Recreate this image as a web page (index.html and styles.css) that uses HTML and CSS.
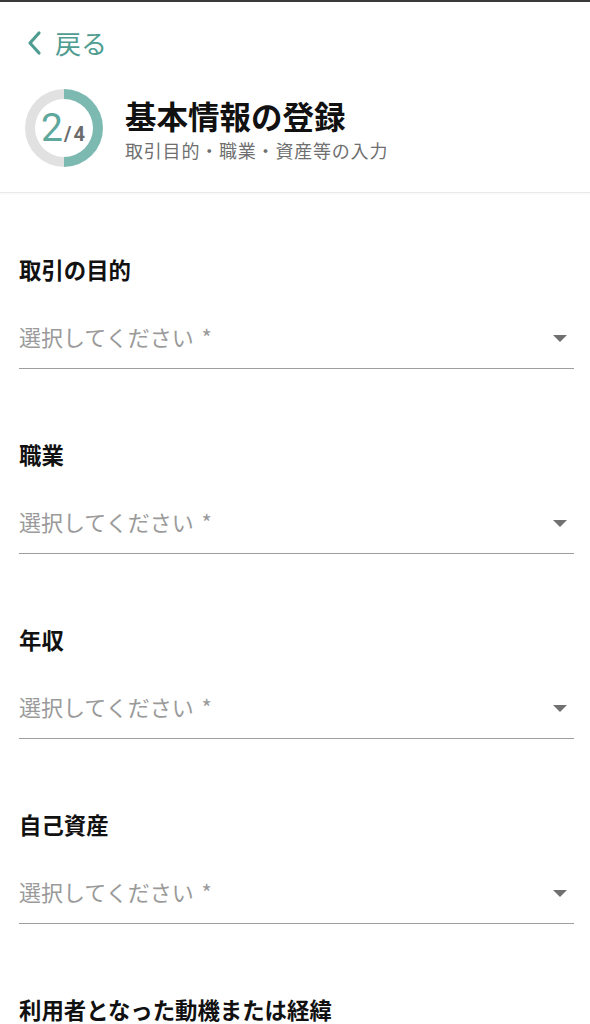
FILE: index.html
```html
<!DOCTYPE html>
<html lang="ja">
<head>
  <meta charset="UTF-8">
  <meta name="viewport" content="width=device-width, initial-scale=1">
  <title>基本情報の登録</title>
  <link rel="stylesheet" href="styles.css">
</head>
<body>

<div class="header">
  <a class="back" href="#">
    <svg class="back-icon" width="18" height="26" viewBox="0 0 18 26">
      <path d="M14 3 L5 13 L14 23" fill="none" stroke="#4f9d91" stroke-width="3.2" stroke-linecap="round" stroke-linejoin="round"/>
    </svg>
    <span>戻る</span>
  </a>

  <div class="step">
    <div class="ring">
      <div class="ring-inner">
        <span class="step-now">2</span><span class="step-all">/4</span>
      </div>
    </div>
    <div class="step-text">
      <h1>基本情報の登録</h1>
      <p>取引目的・職業・資産等の入力</p>
    </div>
  </div>
</div>

<form class="form">
  <div class="field">
    <div class="label">取引の目的</div>
    <div class="select"><span>選択してください *</span><i class="caret"></i></div>
  </div>
  <div class="field">
    <div class="label">職業</div>
    <div class="select"><span>選択してください *</span><i class="caret"></i></div>
  </div>
  <div class="field">
    <div class="label">年収</div>
    <div class="select"><span>選択してください *</span><i class="caret"></i></div>
  </div>
  <div class="field">
    <div class="label">自己資産</div>
    <div class="select"><span>選択してください *</span><i class="caret"></i></div>
  </div>
  <div class="field">
    <div class="label">利用者となった動機または経緯</div>
    <div class="select"><span>選択してください *</span><i class="caret"></i></div>
  </div>
</form>

</body>
</html>
```

FILE: styles.css
```css
body {
  margin: 0;
  font-family: "Noto Sans CJK JP", "Noto Sans", sans-serif;
  background: #fff;
  color: #111;
  border-top: 2px solid #3a3a3c;
}
.header {
  border-bottom: 1px solid #e8e8e8;
  box-shadow: 0 1px 2px rgba(0,0,0,0.04);
  padding: 0 0 25px 25px;
}
.back {
  display: flex;
  align-items: center;
  gap: 12px;
  height: 34px;
  margin-top: 24px;
  text-decoration: none;
  color: #4f9d91;
  font-size: 26px;
  line-height: 34px;
}
.back-icon {
  display: block;
}
.step {
  display: flex;
  align-items: center;
  margin-top: 29px;
}
.ring {
  width: 78px;
  height: 78px;
  border-radius: 50%;
  background: conic-gradient(#7cb9b1 0 50%, #e1e1e1 50% 100%);
  display: flex;
  align-items: center;
  justify-content: center;
  flex-shrink: 0;
}
.ring-inner {
  width: 58px;
  height: 58px;
  border-radius: 50%;
  background: #fff;
  display: flex;
  align-items: baseline;
  justify-content: center;
  line-height: 58px;
  font-family: "Roboto", "Noto Sans", sans-serif;
}
.step-now {
  font-size: 39px;
  color: #5ea89c;
}
.step-all {
  font-size: 20px;
  font-weight: bold;
  color: #6b6b6b;
  letter-spacing: 2px;
  margin-left: 1px;
}
.step-text {
  margin-left: 22px;
}
h1 {
  margin: 0;
  font-size: 31.5px;
  line-height: 40px;
  font-weight: bold;
  color: #111;
}
.step-text p {
  margin: 3px 0 0;
  font-size: 18px;
  line-height: 24px;
  letter-spacing: 0.8px;
  color: #6f6f6f;
}
.form {
  padding: 64px 16px 0 19px;
}
.field {
  margin-bottom: 73px;
}
.label {
  font-size: 22.4px;
  line-height: 24px;
  font-weight: bold;
  color: #111;
}
.select {
  display: flex;
  align-items: center;
  justify-content: space-between;
  margin-top: 41px;
  padding-bottom: 18px;
  border-bottom: 1px solid #9e9e9e;
  font-size: 22px;
  line-height: 28px;
  color: #9a9a9a;
}
.select span {
  word-spacing: 3px;
}
.caret {
  width: 0;
  height: 0;
  border-left: 7px solid transparent;
  border-right: 7px solid transparent;
  border-top: 7px solid #707070;
  margin-right: 7px;
  margin-top: 5px;
}
```
